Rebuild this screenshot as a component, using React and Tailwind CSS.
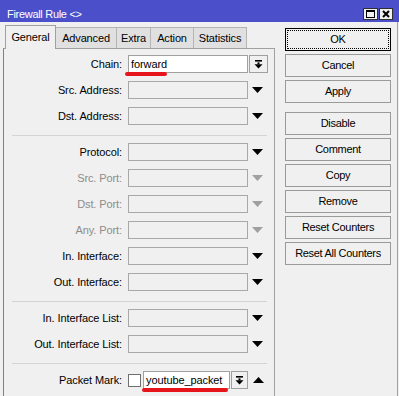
import React from "react";

const font = { fontFamily: '"Liberation Sans", Arial, sans-serif' };

function TriDown({ gray }) {
  return (
    <svg width="11" height="6" viewBox="0 0 11 6" className="ml-[4px] shrink-0">
      <polygon points="0,0 11,0 5.5,6" fill={gray ? "#a0a0a0" : "#000"} />
    </svg>
  );
}

function TriUp() {
  return (
    <svg width="11" height="6" viewBox="0 0 11 6" className="ml-[5px] shrink-0">
      <polygon points="0,6 11,6 5.5,0" fill="#000" />
    </svg>
  );
}

function DropBtn({ w }) {
  return (
    <div
      className={`ml-[1px] h-[18px] ${w} border border-[#a0a0a0] bg-[#f0f0f0] flex items-center justify-center shrink-0`}
    >
      <svg width="9" height="9" viewBox="0 0 9 9">
        <rect x="1" y="0" width="7" height="1.6" fill="#000" />
        <rect x="3.5" y="2.4" width="2" height="2" fill="#000" />
        <polygon points="0.5,4.2 8.5,4.2 4.5,8.6" fill="#000" />
      </svg>
    </div>
  );
}

function Row({ label, gray, children }) {
  return (
    <div className="flex items-center h-[26px]">
      <div
        className={`w-[118px] text-right shrink-0 tracking-[-0.1px] ${gray ? "text-[#8d8d8d]" : "text-black"}`}
      >
        {label}
      </div>
      {children || (
        <>
          <div className="ml-[6px] w-[120px] h-[18px] border border-[#a8a8a8] bg-[#f0f0f0] shrink-0" />
          <TriDown gray={gray} />
        </>
      )}
    </div>
  );
}

function Sep() {
  return (
    <div className="h-[10px] pt-[6px]">
      <div className="ml-[8px] w-[255px] h-px bg-[#d4d4d4]" />
    </div>
  );
}

function Btn({ children }) {
  return (
    <div className="h-[23px] border border-[#9a9a9a] bg-[#f0f0f0] flex items-center justify-center text-black">
      {children}
    </div>
  );
}

export default function App() {
  return (
    <div
      className="relative w-[399px] h-[396px] bg-[#f0f0f0] overflow-hidden text-[11px] tracking-[-0.3px] flex flex-col"
      style={font}
    >
      {/* title bar */}
      <div className="h-[22px] bg-[#4b4fc9] flex items-start pt-[8px] pl-[7px] pr-[6px] shrink-0">
        <div className="text-white leading-[13px] tracking-[-0.3px] flex-1">Firewall Rule &lt;&gt;</div>
        <div className="flex gap-[1px]">
          <div className="w-[15px] h-[12px] border border-[#303030] bg-[#f0f0f0] flex items-center justify-center">
            <div className="w-[9px] h-[8px] border border-black border-t-2" />
          </div>
          <div className="w-[14px] h-[12px] border border-[#303030] bg-[#f0f0f0] flex items-center justify-center">
            <svg width="8" height="8" viewBox="0 0 8 8">
              <path d="M1 1 L7 7 M7 1 L1 7" stroke="#000" strokeWidth="2" />
            </svg>
          </div>
        </div>
      </div>

      {/* body */}
      <div className="flex flex-1 min-h-0 w-[398px] border-r border-[#a0a0a0] pl-[3px]">
        {/* left */}
        <div className="w-[272px] flex flex-col shrink-0">
          <div className="h-[26px] flex items-end pl-[2px] shrink-0 tracking-[-0.15px]">
            <div className="relative z-10 -mb-px h-[24px] w-[51px] bg-[#f0f0f0] border-x border-t border-[#a0a0a0] flex items-center justify-center">
              General
            </div>
            <div className="h-[21px] w-[61px] bg-[#e0e0e0] border-t border-r border-[#b4b4b4] flex items-center justify-center">
              Advanced
            </div>
            <div className="h-[21px] w-[34px] bg-[#e0e0e0] border-t border-r border-[#b4b4b4] flex items-center justify-center">
              Extra
            </div>
            <div className="h-[21px] w-[43px] bg-[#e0e0e0] border-t border-r border-[#b4b4b4] flex items-center justify-center">
              Action
            </div>
            <div className="h-[21px] w-[53px] bg-[#e0e0e0] border-t border-r border-[#b4b4b4] flex items-center justify-center">
              Statistics
            </div>
          </div>
          <div className="flex-1 border-l border-t border-r border-l-[#808080] border-t-[#a0a0a0] border-r-[#a0a0a0] pt-[2px]">
            <Row label="Chain:">
              <div className="ml-[6px] w-[120px] h-[18px] border border-[#a0a0a0] bg-white shrink-0 flex items-center pl-[2px] tracking-[-0.1px]">
                forward
              </div>
              <DropBtn w="w-[19px]" />
            </Row>
            <Row label="Src. Address:" />
            <Row label="Dst. Address:" />
            <Sep />
            <Row label="Protocol:" />
            <Row label="Src. Port:" gray />
            <Row label="Dst. Port:" gray />
            <Row label="Any. Port:" gray />
            <Row label="In. Interface:" />
            <Row label="Out. Interface:" />
            <Sep />
            <Row label="In. Interface List:" />
            <Row label="Out. Interface List:" />
            <Sep />
            <Row label="Packet Mark:">
              <div className="ml-[6px] w-[13px] h-[13px] border border-[#707070] bg-white shrink-0" />
              <div className="ml-[2px] w-[87px] h-[18px] border border-[#a0a0a0] bg-white shrink-0 flex items-center pl-[2px] tracking-[-0.1px]">
                youtube_packet
              </div>
              <DropBtn w="w-[17px]" />
              <TriUp />
            </Row>
          </div>
        </div>

        {/* right buttons */}
        <div className="ml-[10px] w-[106px] pt-[6px] flex flex-col gap-[3px] shrink-0">
          <div className="h-[23px] border border-black p-[1px] bg-[#f0f0f0]">
            <div className="h-full border border-dotted border-black flex items-center justify-center">OK</div>
          </div>
          <Btn>Cancel</Btn>
          <Btn>Apply</Btn>
          <div className="mt-[6px] flex flex-col gap-[3px]">
            <Btn>Disable</Btn>
            <Btn>Comment</Btn>
            <Btn>Copy</Btn>
            <Btn>Remove</Btn>
            <Btn>Reset Counters</Btn>
            <Btn>Reset All Counters</Btn>
          </div>
        </div>
      </div>

      {/* red annotation underlines */}
      <div className="absolute left-[6px] top-[42px] w-[45px] h-[3px] rounded-full bg-[#e8141c]" />
      <div className="absolute left-[125px] top-[72px] w-[42px] h-[4px] rounded-full bg-[#e8141c]" />
      <div className="absolute left-[142px] top-[388px] w-[86px] h-[4px] rounded-full bg-[#e8141c]" />
    </div>
  );
}
